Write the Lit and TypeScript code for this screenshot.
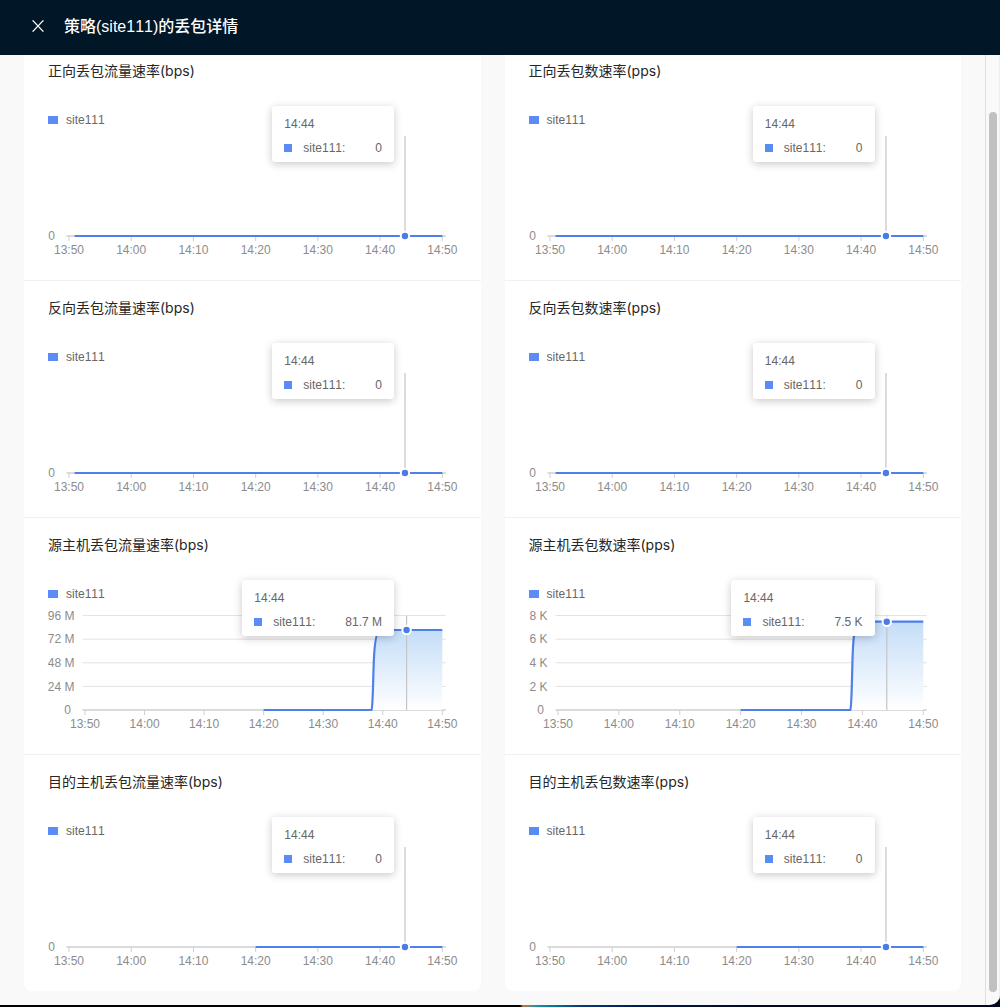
import { LitElement, css, html, svg } from 'lit'
import { customElement, property } from 'lit/decorators.js'

interface ChartData {
  title: string
  x0: number // first tick position in the panel
  lineFrom: number // minute the blue line begins
  yLabels: string[]
  value: string
  valueY?: number // when set the series jumps to this y
  riseAt?: number
}

const AXIS_Y = 107
const X1 = 418.3
const TICKS = ['13:50', '14:00', '14:10', '14:20', '14:30', '14:40', '14:50']
const HOVER_MIN = 54

@customElement('chart-panel')
export class ChartPanel extends LitElement {
  @property({ type: Object })
  data!: ChartData

  xAt(min: number) {
    return this.data.x0 + ((X1 - this.data.x0) * min) / 60
  }

  seriesPath() {
    const { lineFrom, valueY, riseAt } = this.data
    const start = this.xAt(lineFrom)
    if (valueY === undefined || riseAt === undefined) {
      return `M${start} ${AXIS_Y}L${X1} ${AXIS_Y}`
    }
    const r = this.xAt(riseAt)
    const mid = valueY + (AXIS_Y - valueY) * 0.38
    return `M${start} ${AXIS_Y}L${r} ${AXIS_Y}C${r + 1.4} ${AXIS_Y - 2} ${r + 1.4} ${AXIS_Y - 22} ${r + 2.4} ${mid}C${r + 3.2} ${valueY + 12} ${r + 5} ${valueY} ${r + 9} ${valueY}L${X1} ${valueY}`
  }

  areaPath() {
    const { valueY, riseAt } = this.data
    if (valueY === undefined || riseAt === undefined) return ''
    const r = this.xAt(riseAt)
    const mid = valueY + (AXIS_Y - valueY) * 0.38
    return `M${r} ${AXIS_Y}C${r + 1.4} ${AXIS_Y - 2} ${r + 1.4} ${AXIS_Y - 22} ${r + 2.4} ${mid}C${r + 3.2} ${valueY + 12} ${r + 5} ${valueY} ${r + 9} ${valueY}L${X1} ${valueY}L${X1} ${AXIS_Y}Z`
  }

  render() {
    const { x0, yLabels, valueY, value, title } = this.data
    const hoverX = this.xAt(HOVER_MIN)
    const pointY = valueY ?? AXIS_Y
    const cursorTop = valueY === undefined ? 7 : 12.6
    return html`
      <div class="title">${title}</div>
      <div class="legend"><i class="swatch"></i>site111</div>
      <svg class="plot" width="456" height="151">
        <defs>
          <linearGradient id="fill" x1="0" y1="0" x2="0" y2="1">
            <stop offset="0" stop-color="#c4ddf8"></stop>
            <stop offset="1" stop-color="#ffffff"></stop>
          </linearGradient>
        </defs>
        ${yLabels.map((label, i) => {
          // labels count up from the axis, 23.6px apart
          const y = AXIS_Y - 23.6 * (yLabels.length - 1 - i)
          return svg`
            ${label !== '0'
              ? svg`<line class="grid" x1=${x0 - 2.5} x2=${X1 + 3.5} y1=${y} y2=${y}></line>`
              : null}
            <text class="ylabel" x=${label === '0' ? x0 - 14 : x0 - 10.5} y=${y + 4.2}>${label}</text>
          `
        })}
        <line class="axis" x1=${x0 - 2.5} x2=${X1 + 3.5} y1=${AXIS_Y} y2=${AXIS_Y}></line>
        ${TICKS.map((label, i) => {
          const x = this.xAt(i * 10)
          return svg`
            <line class="tick" x1=${x} x2=${x} y1=${AXIS_Y} y2=${AXIS_Y + 5}></line>
            <text class="xlabel" x=${x} y=${AXIS_Y + 18.3}>${label}</text>
          `
        })}
        ${valueY !== undefined ? svg`<path d=${this.areaPath()} fill="url(#fill)"></path>` : null}
        <path class="series" d=${this.seriesPath()}></path>
        <line class="cursor" x1=${hoverX} x2=${hoverX} y1=${cursorTop} y2=${AXIS_Y}></line>
        <circle class="point" cx=${hoverX} cy=${pointY} r="4.2"></circle>
      </svg>
      <div class="tooltip">
        <div class="tip-time">14:44</div>
        <div class="tip-row">
          <i class="tip-swatch"></i>
          <span>site111:</span>
          <span class="tip-value">${value}</span>
        </div>
      </div>
    `
  }

  static styles = css`
    :host {
      display: block;
      position: relative;
      height: 237px;
      box-sizing: border-box;
      padding-top: 17px;
      border-bottom: 1px solid #f0f0f0;
      font-family: 'Liberation Sans', 'Noto Sans CJK SC', sans-serif;
      font-kerning: none;
    }
    :host(:last-child) {
      height: 236px;
      border-bottom: none;
    }
    .title {
      padding-left: 24px;
      font-family: Inter, 'Noto Sans CJK SC', sans-serif;
      font-size: 14px;
      line-height: 20px;
      font-weight: 400;
      color: #262626;
    }
    .legend {
      display: flex;
      align-items: center;
      gap: 8px;
      box-sizing: border-box;
      height: 20px;
      margin-top: 28px;
      padding: 1px 0 0 24px;
      font-size: 12px;
      color: #666;
    }
    .swatch {
      width: 10px;
      height: 8px;
      background: #5b8cf5;
    }
    .plot {
      display: block;
    }
    .grid {
      stroke: #e2e2e2;
      stroke-width: 1;
    }
    .axis {
      stroke: #cfcfcf;
      stroke-width: 1.5;
    }
    .tick {
      stroke: #cfcfcf;
      stroke-width: 1;
    }
    .ylabel,
    .xlabel {
      font-size: 12px;
      fill: #8c8c8c;
    }
    .ylabel {
      text-anchor: end;
    }
    .xlabel {
      text-anchor: middle;
    }
    .series {
      fill: none;
      stroke: #4f7fe8;
      stroke-width: 2.2;
    }
    .cursor {
      stroke: #c4c4c4;
      stroke-width: 1.2;
    }
    .point {
      fill: #4a7ce8;
      stroke: #fff;
      stroke-width: 2;
    }
    .tooltip {
      position: absolute;
      top: 62px;
      right: 86.5px;
      box-sizing: border-box;
      height: 56px;
      padding: 8px 12px 4px;
      background: #fff;
      border-radius: 3px;
      box-shadow: 0 2px 8px rgba(0, 0, 0, 0.22);
      font-size: 12px;
      color: #666;
    }
    .tip-time {
      line-height: 20px;
    }
    .tip-row {
      display: flex;
      align-items: center;
      height: 20px;
      margin-top: 4px;
      white-space: nowrap;
    }
    .tip-swatch {
      width: 8px;
      height: 8px;
      margin-right: 11px;
      background: #5b8cf5;
    }
    .tip-value {
      margin-left: 30px;
    }
  `
}

const zero = ['0']
const bps = ['96 M', '72 M', '48 M', '24 M', '0']
const pps = ['8 K', '6 K', '4 K', '2 K', '0']

const LEFT: ChartData[] = [
  { title: '正向丢包流量速率(bps)', x0: 45, lineFrom: 0.9, yLabels: zero, value: '0' },
  { title: '反向丢包流量速率(bps)', x0: 45, lineFrom: 0.9, yLabels: zero, value: '0' },
  { title: '源主机丢包流量速率(bps)', x0: 61, lineFrom: 30, yLabels: bps, value: '81.7 M', valueY: 27, riseAt: 48.1 },
  { title: '目的主机丢包流量速率(bps)', x0: 45, lineFrom: 30, yLabels: zero, value: '0' },
]

const RIGHT: ChartData[] = [
  { title: '正向丢包数速率(pps)', x0: 45, lineFrom: 0.9, yLabels: zero, value: '0' },
  { title: '反向丢包数速率(pps)', x0: 45, lineFrom: 0.9, yLabels: zero, value: '0' },
  { title: '源主机丢包数速率(pps)', x0: 53, lineFrom: 30, yLabels: pps, value: '7.5 K', valueY: 18.7, riseAt: 48 },
  { title: '目的主机丢包数速率(pps)', x0: 45, lineFrom: 30, yLabels: zero, value: '0' },
]

@customElement('app-root')
export class AppRoot extends LitElement {
  renderCard(items: ChartData[]) {
    return html`
      <section class="card">
        ${items.map((d) => html`<chart-panel .data=${d}></chart-panel>`)}
      </section>
    `
  }

  render() {
    return html`
      <div class="window">
        <header class="header">
          <svg class="close" width="12" height="12" viewBox="0 0 12 12">
            <path d="M0.6 0.4L11.4 11.6M11.4 0.4L0.6 11.6"></path>
          </svg>
          <h1>策略(site111)的丢包详情</h1>
        </header>
        <div class="body">
          <main class="scroll">
            <div class="cards">${this.renderCard(LEFT)} ${this.renderCard(RIGHT)}</div>
          </main>
          <div class="track"><div class="thumb"></div></div>
        </div>
      </div>
    `
  }

  static styles = css`
    :host {
      display: block;
      width: 1000px;
      height: 1007px;
      overflow: hidden;
      background: linear-gradient(
        to right,
        #000 520px,
        #c9743c 523px,
        #2f8f9c 535px,
        #0a7f9f 548px,
        #0b3a78 580px,
        #061a50 640px,
        #03081c 760px
      );
    }
    .window {
      display: flex;
      flex-direction: column;
      height: 1005px;
      background: #f9f9f9;
      border-bottom-right-radius: 10px;
      overflow: hidden;
    }
    .header {
      display: flex;
      align-items: center;
      flex: none;
      box-sizing: border-box;
      height: 55px;
      padding: 0 0 6px 32px;
      background: #011627;
    }
    .close {
      flex: none;
      margin: 3px 20px 0 0;
    }
    .close path {
      fill: none;
      stroke: #fff;
      stroke-width: 1.3;
    }
    h1 {
      margin: 0;
      font-family: 'Liberation Sans', 'Noto Sans CJK SC', sans-serif;
      font-kerning: none;
      font-size: 16px;
      font-weight: 500;
      color: #fff;
    }
    .body {
      display: flex;
      flex: 1;
      min-height: 0;
    }
    .scroll {
      flex: 1;
      min-width: 0;
      overflow: hidden;
    }
    .cards {
      display: grid;
      grid-template-columns: 1fr 1fr;
      gap: 24px;
      margin-top: -11px;
      padding: 0 24px;
    }
    .card {
      background: #fff;
      border-radius: 8px;
      overflow: hidden;
    }
    .track {
      flex: none;
      box-sizing: border-box;
      width: 15px;
      padding: 57px 2px 0 3px;
      border-left: 1px solid #dedede;
      border-right: 1px solid #eee;
    }
    .thumb {
      width: 8px;
      height: 880px;
      border-radius: 4px;
      background: #c1c1c1;
    }
  `
}

declare global {
  interface HTMLElementTagNameMap {
    'chart-panel': ChartPanel
    'app-root': AppRoot
  }
}
